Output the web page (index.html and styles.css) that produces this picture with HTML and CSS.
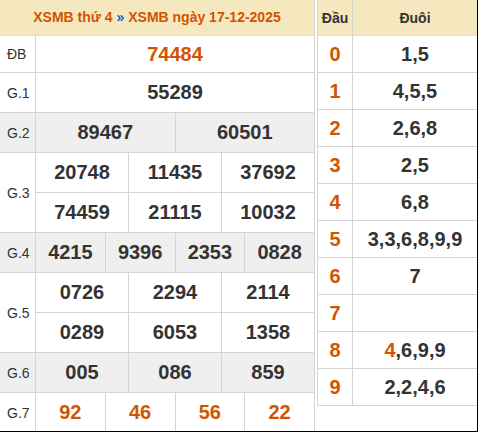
FILE: index.html
```html
<!DOCTYPE html>
<html lang="vi">
<head>
<meta charset="utf-8">
<title>XSMB ngày 17-12-2025</title>
<link rel="stylesheet" href="styles.css">
</head>
<body>
<div class="wrap">
  <div class="results">
    <div class="head"><span>XSMB thứ 4</span> <span class="sep">»</span> <span>XSMB ngày 17-12-2025</span></div>

    <div class="row r-db">
      <div class="label">ĐB</div>
      <div class="data"><div class="sub"><div class="cell special">74484</div></div></div>
    </div>
    <div class="row">
      <div class="label">G.1</div>
      <div class="data"><div class="sub"><div class="cell">55289</div></div></div>
    </div>
    <div class="row alt">
      <div class="label">G.2</div>
      <div class="data"><div class="sub"><div class="cell">89467</div><div class="cell">60501</div></div></div>
    </div>
    <div class="row">
      <div class="label">G.3</div>
      <div class="data">
        <div class="sub"><div class="cell">20748</div><div class="cell">11435</div><div class="cell">37692</div></div>
        <div class="sub"><div class="cell">74459</div><div class="cell">21115</div><div class="cell">10032</div></div>
      </div>
    </div>
    <div class="row alt">
      <div class="label">G.4</div>
      <div class="data"><div class="sub"><div class="cell">4215</div><div class="cell">9396</div><div class="cell">2353</div><div class="cell">0828</div></div></div>
    </div>
    <div class="row">
      <div class="label">G.5</div>
      <div class="data">
        <div class="sub"><div class="cell">0726</div><div class="cell">2294</div><div class="cell">2114</div></div>
        <div class="sub"><div class="cell">0289</div><div class="cell">6053</div><div class="cell">1358</div></div>
      </div>
    </div>
    <div class="row alt">
      <div class="label">G.6</div>
      <div class="data"><div class="sub"><div class="cell">005</div><div class="cell">086</div><div class="cell">859</div></div></div>
    </div>
    <div class="row">
      <div class="label">G.7</div>
      <div class="data"><div class="sub"><div class="cell special">92</div><div class="cell special">46</div><div class="cell special">56</div><div class="cell special">22</div></div></div>
    </div>
  </div>

  <div class="loto">
    <div class="lrow lhead"><div class="dau">Đầu</div><div class="duoi">Đuôi</div></div>
    <div class="lrow"><div class="dau">0</div><div class="duoi">1,5</div></div>
    <div class="lrow"><div class="dau">1</div><div class="duoi">4,5,5</div></div>
    <div class="lrow"><div class="dau">2</div><div class="duoi">2,6,8</div></div>
    <div class="lrow"><div class="dau">3</div><div class="duoi">2,5</div></div>
    <div class="lrow"><div class="dau">4</div><div class="duoi">6,8</div></div>
    <div class="lrow"><div class="dau">5</div><div class="duoi">3,3,6,8,9,9</div></div>
    <div class="lrow"><div class="dau">6</div><div class="duoi">7</div></div>
    <div class="lrow"><div class="dau">7</div><div class="duoi"></div></div>
    <div class="lrow"><div class="dau">8</div><div class="duoi"><span class="hl">4</span>,6,9,9</div></div>
    <div class="lrow"><div class="dau">9</div><div class="duoi">2,2,4,6</div></div>
  </div>
</div>
</body>
</html>
```

FILE: styles.css
```css
* { box-sizing: border-box; }
html, body { margin: 0; padding: 0; background: #fff; }
body {
  font-family: "Liberation Sans", Arial, sans-serif;
  color: #333;
}
.wrap {
  width: 478px;
  height: 432px;
  display: flex;
  gap: 2px;
  border-right: 1px solid #000;
  border-bottom: 1px solid #000;
  overflow: hidden;
}

/* left: results */
.results {
  width: 315px;
  flex: none;
  border-right: 1px solid #d4d4d4;
  display: flex;
  flex-direction: column;
}
.head {
  height: 36px;
  flex: none;
  background: #f6e8be;
  border-bottom: 1px solid #ddd;
  color: #d35400;
  font-weight: bold;
  font-size: 14px;
  line-height: 35px;
  text-align: center;
}
.head .sep { color: #1f5fb0; }

.row {
  display: flex;
  flex: none;
  border-bottom: 1px solid #d4d4d4;
}
.row.alt { background: #efefef; }
.label {
  width: 36px;
  flex: none;
  border-right: 1px solid #d4d4d4;
  display: flex;
  align-items: center;
  padding-left: 7px;
  font-size: 14px;
  color: #333;
}
.data {
  flex: 1;
  display: flex;
  flex-direction: column;
}
.sub {
  display: flex;
  height: 39px;
}
.sub + .sub {
  height: 40px;
  border-top: 1px solid #d4d4d4;
}
.r-db .sub { height: 36px; }
.cell {
  flex: 1;
  display: flex;
  align-items: center;
  justify-content: center;
  font-weight: bold;
  font-size: 20px;
  color: #333;
}
.cell + .cell { border-left: 1px solid #d4d4d4; }
.special { color: #d35400; }

/* right: loto */
.loto {
  width: 160px;
  flex: none;
  align-self: flex-start;
  border-left: 1px solid #d4d4d4;
}
.lrow {
  display: flex;
  height: 37px;
  border-bottom: 1px solid #d4d4d4;
}
.lrow.lhead {
  height: 36px;
  background: #f6e8be;
  border-bottom-color: #ddd;
}
.dau {
  width: 35px;
  flex: none;
  border-right: 1px solid #d4d4d4;
  display: flex;
  align-items: center;
  justify-content: center;
  font-weight: bold;
  font-size: 20px;
  color: #d35400;
}
.duoi {
  flex: 1;
  display: flex;
  align-items: center;
  justify-content: center;
  font-weight: bold;
  font-size: 20px;
  color: #333;
}
.lhead .dau, .lhead .duoi {
  font-size: 14px;
  color: #333;
}
.hl { color: #d35400; }
```
